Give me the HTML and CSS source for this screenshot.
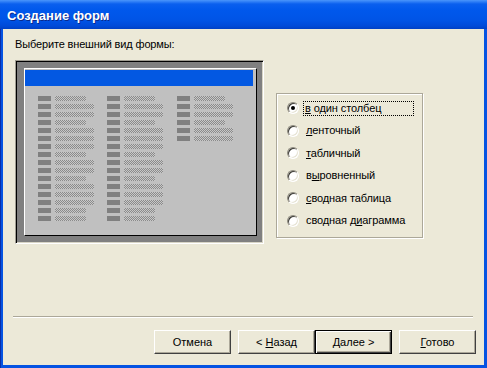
FILE: index.html
```html
<!DOCTYPE html>
<html lang="ru">
<head>
<meta charset="utf-8">
<title>Создание форм</title>
<link rel="stylesheet" href="styles.css">
</head>
<body>
<div class="window">
  <div class="titlebar"><span class="title">Создание форм</span></div>
  <div class="client">
    <p class="prompt">Выберите внешний вид формы:</p>
    <div class="main">
      <div class="preview-frame">
        <div class="preview-panel">
          <div class="preview-header"></div>
          <div class="preview-cols">
            <div class="col">
              <div class="row"><span class="lbl"></span><span class="fld s"></span></div>
              <div class="row"><span class="lbl"></span><span class="fld l"></span></div>
              <div class="row"><span class="lbl"></span><span class="fld l"></span></div>
              <div class="row"><span class="lbl"></span><span class="fld s"></span></div>
              <div class="row"><span class="lbl"></span><span class="fld l"></span></div>
              <div class="row"><span class="lbl"></span><span class="fld l"></span></div>
              <div class="row"><span class="lbl"></span><span class="fld l"></span></div>
              <div class="row"><span class="lbl"></span><span class="fld s"></span></div>
              <div class="row"><span class="lbl"></span><span class="fld l"></span></div>
              <div class="row"><span class="lbl"></span><span class="fld l"></span></div>
              <div class="row"><span class="lbl"></span><span class="fld s"></span></div>
              <div class="row"><span class="lbl"></span><span class="fld l"></span></div>
              <div class="row"><span class="lbl"></span><span class="fld l"></span></div>
              <div class="row"><span class="lbl"></span><span class="fld l"></span></div>
              <div class="row"><span class="lbl"></span><span class="fld s"></span></div>
              <div class="row"><span class="lbl"></span><span class="fld s"></span></div>
            </div>
            <div class="col">
              <div class="row"><span class="lbl"></span><span class="fld s"></span></div>
              <div class="row"><span class="lbl"></span><span class="fld l"></span></div>
              <div class="row"><span class="lbl"></span><span class="fld l"></span></div>
              <div class="row"><span class="lbl"></span><span class="fld s"></span></div>
              <div class="row"><span class="lbl"></span><span class="fld l"></span></div>
              <div class="row"><span class="lbl"></span><span class="fld l"></span></div>
              <div class="row"><span class="lbl"></span><span class="fld l"></span></div>
              <div class="row"><span class="lbl"></span><span class="fld s"></span></div>
              <div class="row"><span class="lbl"></span><span class="fld l"></span></div>
              <div class="row"><span class="lbl"></span><span class="fld l"></span></div>
              <div class="row"><span class="lbl"></span><span class="fld s"></span></div>
              <div class="row"><span class="lbl"></span><span class="fld l"></span></div>
              <div class="row"><span class="lbl"></span><span class="fld l"></span></div>
              <div class="row"><span class="lbl"></span><span class="fld l"></span></div>
              <div class="row"><span class="lbl"></span><span class="fld s"></span></div>
              <div class="row"><span class="lbl"></span><span class="fld s"></span></div>
            </div>
            <div class="col">
              <div class="row"><span class="lbl"></span><span class="fld s"></span></div>
              <div class="row"><span class="lbl"></span><span class="fld l"></span></div>
              <div class="row"><span class="lbl"></span><span class="fld l"></span></div>
              <div class="row"><span class="lbl"></span><span class="fld s"></span></div>
              <div class="row"><span class="lbl"></span><span class="fld l"></span></div>
              <div class="row"><span class="lbl"></span><span class="fld l"></span></div>
            </div>
          </div>
        </div>
      </div>
      <div class="options">
        <div class="opt"><span class="radio checked"></span><span class="opt-label focus"><u>в</u> один столбец</span></div>
        <div class="opt"><span class="radio"></span><span class="opt-label"><u>л</u>енточный</span></div>
        <div class="opt"><span class="radio"></span><span class="opt-label"><u>т</u>абличный</span></div>
        <div class="opt"><span class="radio"></span><span class="opt-label">в<u>ы</u>ровненный</span></div>
        <div class="opt"><span class="radio"></span><span class="opt-label"><u>с</u>водная таблица</span></div>
        <div class="opt"><span class="radio"></span><span class="opt-label">сводная д<u>и</u>аграмма</span></div>
      </div>
    </div>
    <div class="separator"></div>
    <div class="buttons">
      <button class="btn">Отмена</button>
      <button class="btn gap-after-none">&lt; <u>Н</u>азад</button>
      <button class="btn default"><u>Д</u>алее &gt;</button>
      <button class="btn"><u>Г</u>отово</button>
    </div>
  </div>
</div>
</body>
</html>
```

FILE: styles.css
```css
* { box-sizing: border-box; }
html, body { margin: 0; padding: 0; }
body {
  width: 487px;
  height: 368px;
  overflow: hidden;
  background: #000;
  font-family: "Liberation Sans", Arial, sans-serif;
  font-size: 11px;
  color: #000;
}
.window {
  width: 487px;
  height: 368px;
  display: flex;
  flex-direction: column;
  background: #0553e2;
  box-shadow: inset 1px 0 0 #0a2ea8;
}
.titlebar {
  height: 29px;
  flex: none;
  display: flex;
  align-items: center;
  padding-left: 7px;
  background: linear-gradient(#4a95fb 0, #2a7af5 2px, #0a5fee 4px, #0058ec 10px, #0054e6 20px, #004ad8 26px, #0040c4 29px);
}
.title {
  color: #fff;
  font-weight: bold;
  font-size: 13px;
  text-shadow: 1px 1px 0 #0b2a8c;
  padding-top: 1px;
}
.client {
  flex: 1;
  margin: 0 3px 3px 3px;
  background: #ece9d8;
  display: flex;
  flex-direction: column;
}
.prompt {
  margin: 9px 0 0 12px;
  line-height: 13px;
  letter-spacing: -0.15px;
}
.main {
  display: flex;
  align-items: flex-start;
  margin-top: 9px;
}
.preview-frame {
  width: 249px;
  height: 184px;
  margin-left: 12px;
  border: 1px solid;
  border-color: #a09d92 #fff #fff #a09d92;
  box-shadow: inset 1px 1px 0 #000, inset -1px -1px 0 #d8d5c6;
  background: #808080;
  padding: 7px 6px 7px 8px;
}
.preview-panel {
  width: 233px;
  height: 168px;
  background: #c0c0c0;
  border: 1px solid;
  border-color: #fff #000 #000 #fff;
}
.preview-header {
  margin: 1px 0 0 0;
  width: 228px;
  height: 16px;
  background: #0358e2;
}
.preview-cols {
  display: grid;
  grid-template-columns: 69px 70px 70px;
  padding-left: 13px;
  margin-top: 10px;
}
.col {
  display: flex;
  flex-direction: column;
  gap: 3px;
}
.row {
  display: flex;
  gap: 4px;
  height: 5px;
}
.lbl {
  width: 13px;
  height: 5px;
  background: #808080;
}
.fld {
  height: 5px;
  background: repeating-conic-gradient(#8a8a8a 0 25%, #c8c8c8 0 50%) 0 0 / 2px 2px;
}
.fld.s { width: 31px; }
.fld.l { width: 39px; }

.options {
  margin: 33px 0 0 12px;
  width: 147px;
  height: 145px;
  border: 1px solid #aca899;
  box-shadow: inset 1px 1px 0 #fff, 1px 1px 0 #fff;
  padding: 3px 0 0 10px;
  display: flex;
  flex-direction: column;
}
.opt {
  height: 22.5px;
  display: flex;
  align-items: center;
}
.radio {
  position: relative;
  width: 12px;
  height: 12px;
  flex: none;
  border-radius: 50%;
  background: #fff;
  border: 1px solid;
  border-color: #8d8a7e #fff #fff #8d8a7e;
  box-shadow: inset 1px 1px 0 #3c3b36, inset -1px -1px 0 #e6e3d4;
  margin-right: 4px;
}
.radio.checked::after {
  content: "";
  position: absolute;
  left: 3px;
  top: 3px;
  width: 4px;
  height: 4px;
  border-radius: 50%;
  background: #000;
}
.opt-label {
  padding: 0 2px;
  line-height: 13px;
  border: 1px solid transparent;
  white-space: nowrap;
  letter-spacing: -0.1px;
}
.opt-label.focus {
  width: 111px;
  height: 15px;
  border: 1px dotted #000;
  padding: 0 1px;
}
.separator {
  margin: 72px 11px 0 10px;
  height: 2px;
  border-top: 1px solid #aca899;
  border-bottom: 1px solid #fff;
}
.buttons {
  display: flex;
  justify-content: flex-end;
  margin-top: 12px;
  padding-right: 8px;
  gap: 7px;
}
.btn {
  width: 77px;
  height: 24px;
  margin: 0;
  padding: 0;
  font-family: "Liberation Sans", Arial, sans-serif;
  font-size: 11px;
  color: #000;
  background: #ece9d8;
  border: 1px solid;
  border-color: #fff #404040 #404040 #fff;
  box-shadow: inset -1px -1px 0 #aca899;
}
.btn.gap-after-none { margin-right: -7px; }
.btn.default {
  border: 1px solid #000;
  box-shadow: inset 1px 1px 0 #fff, inset -1px -1px 0 #404040, inset -2px -2px 0 #aca899;
}
```
